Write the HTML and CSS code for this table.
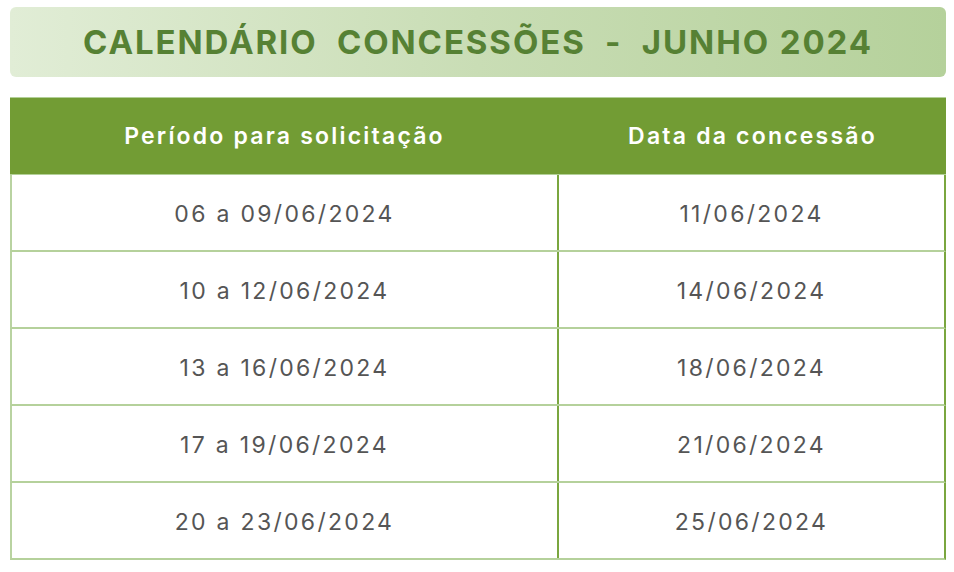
FILE: index.html
```html
<!DOCTYPE html>
<html lang="pt">
<head>
<meta charset="utf-8">
<title>Calendário Concessões - Junho 2024</title>
<link rel="stylesheet" href="styles.css">
</head>
<body>
<div class="page">
  <div class="title">CALENDÁRIO&nbsp; CONCESSÕES&nbsp; -&nbsp; JUNHO 2024</div>
  <div class="table">
    <div class="head">
      <div class="hcell">Período para solicitação</div>
      <div class="hcell">Data da concessão</div>
    </div>
    <div class="row"><div class="cell c1">06 a 09/06/2024</div><div class="cell">11/06/2024</div></div>
    <div class="row"><div class="cell c1">10 a 12/06/2024</div><div class="cell">14/06/2024</div></div>
    <div class="row"><div class="cell c1">13 a 16/06/2024</div><div class="cell">18/06/2024</div></div>
    <div class="row"><div class="cell c1">17 a 19/06/2024</div><div class="cell">21/06/2024</div></div>
    <div class="row"><div class="cell c1">20 a 23/06/2024</div><div class="cell">25/06/2024</div></div>
  </div>
</div>
</body>
</html>
```
FILE: styles.css
```css
html, body { margin: 0; padding: 0; background: #ffffff; }
body { font-family: Inter, "Noto Sans", sans-serif; }
.page { padding: 7px 8px 0 10px; display: flex; flex-direction: column; gap: 20px; }
.title {
  height: 70px;
  border-radius: 6px;
  background: linear-gradient(90deg, #e1edd6 0%, #c9ddb5 50%, #b5d19b 100%);
  color: #568134;
  font-weight: 700;
  font-size: 33px;
  letter-spacing: 1.9px;
  display: flex; align-items: center; justify-content: center;
  white-space: pre;
}
.table { display: flex; flex-direction: column; width: 936px; }
.head {
  display: grid; grid-template-columns: 549px 1fr;
  height: 78px;
  box-sizing: border-box;
  background: #729c34;
  border-top: 1px solid #b3d098;
  border-bottom: 1px solid #b3d098;
}
.hcell {
  color: #ffffff; font-weight: 600; font-size: 23px; letter-spacing: 2.2px;
  display: flex; align-items: center; justify-content: center;
}
.row {
  display: grid; grid-template-columns: 547px 1fr;
  height: 77px;
  box-sizing: border-box;
  border-bottom: 2px solid #b5d19b;
  border-left: 2px solid #b9d3a1;
  border-right: 2px solid #7aa63f;
}
.cell {
  color: #555555; font-size: 23px; letter-spacing: 2.3px; font-weight: 400;
  display: flex; align-items: center; justify-content: center;
  padding-top: 2px;
}
.c1 { border-right: 2px solid #7aa63f; }
```
